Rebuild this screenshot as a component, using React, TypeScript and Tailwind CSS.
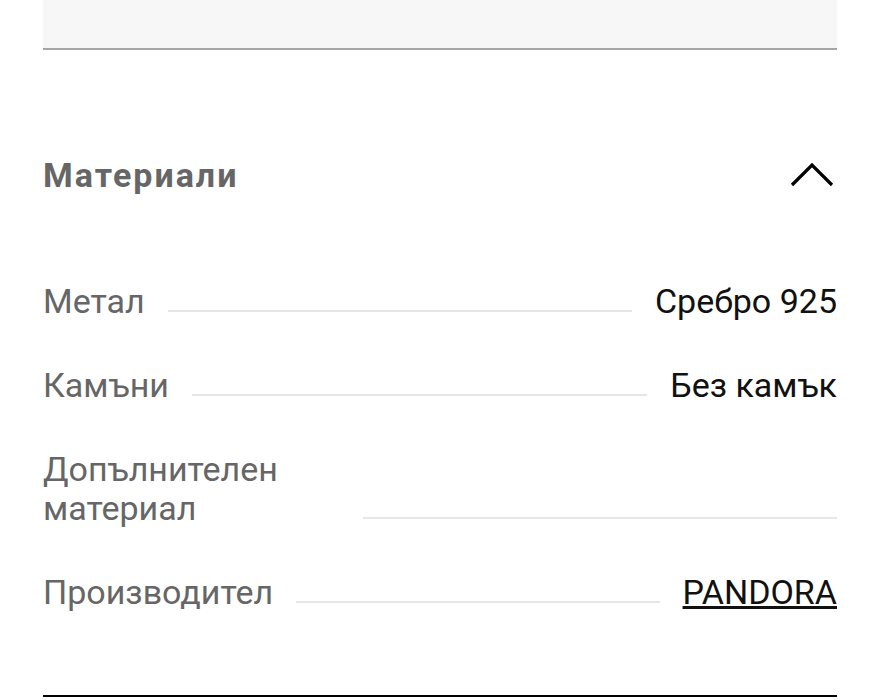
import React from "react";

const rows: { label: string; value: string; link?: boolean }[] = [
  { label: "Метал", value: "Сребро 925" },
  { label: "Камъни", value: "Без камък" },
  { label: "Допълнителен материал", value: "" },
  { label: "Производител", value: "PANDORA", link: true },
];

export default function App() {
  return (
    <div
      className="w-[880px] h-[700px] bg-white overflow-hidden"
      style={{ fontFamily: "Roboto, 'Noto Sans', sans-serif" }}
    >
      <div className="px-[43px]">
        <div className="h-[50px] bg-[#f7f7f7] border-b-2 border-[#a6a6a6]" />
        <div className="mt-[105px] h-[40px] flex items-center justify-between">
          <h2 className="text-[34px] leading-[40px] font-bold tracking-[2px] text-[#666666]">
            Материали
          </h2>
          <svg width="44" height="26" viewBox="0 0 44 26" className="mr-[3px]">
            <path d="M2 23 L22 3 L42 23" fill="none" stroke="#000" strokeWidth="3.2" />
          </svg>
        </div>
        <div className="mt-[87px] flex flex-col gap-[45px]">
          {rows.map((r) => (
            <div key={r.label} className="flex items-end text-[34px] leading-[39px]">
              <span className="shrink-0 max-w-[297px] text-[#666666]">{r.label}</span>
              <span className="flex-1 h-[2px] bg-[#e6e6e6] ml-[23px] mb-[9px]" />
              {r.value ? (
                <span
                  className={
                    r.link
                      ? "shrink-0 pl-[23px] whitespace-nowrap text-[#111111] underline decoration-[3px] underline-offset-[2px]"
                      : "shrink-0 pl-[23px] whitespace-nowrap text-[#111111]"
                  }
                >
                  {r.value}
                </span>
              ) : null}
            </div>
          ))}
        </div>
        <div className="mt-[83px] h-[2px] bg-black" />
      </div>
    </div>
  );
}
